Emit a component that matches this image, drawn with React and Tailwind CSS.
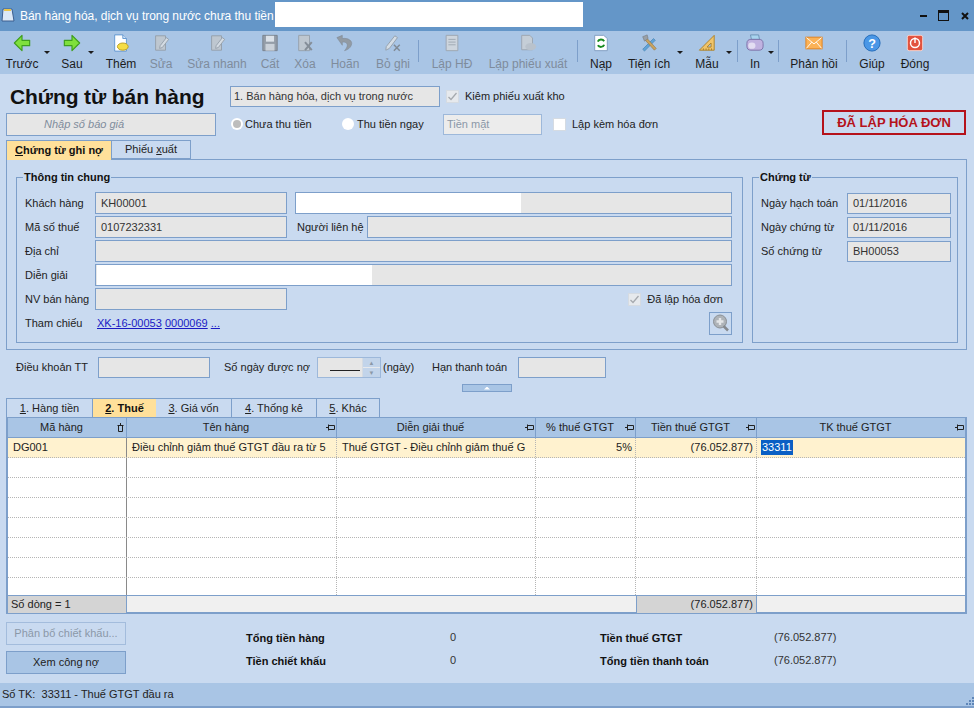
import React from "react";

const FONT = "font-['Liberation_Sans',Arial,sans-serif]";

// toolbar icons, all drawn on a 20x20 box
const icons = {
    back: (
        <path d="M10 1.5 L1.5 10 L10 18.5 L10 13 L18.5 13 L18.5 7 L10 7 Z" fill="#7fe03c" stroke="#3f9e1e" strokeWidth="1.3" strokeLinejoin="round" />
    ),
    next: (
        <path d="M10 1.5 L18.5 10 L10 18.5 L10 13 L1.5 13 L1.5 7 L10 7 Z" fill="#7fe03c" stroke="#3f9e1e" strokeWidth="1.3" strokeLinejoin="round" />
    ),
    add: (
        <>
            <path d="M3 1 H12 L16 5 V19 H3 Z" fill="#fff" stroke="#5b93cf" />
            <path d="M12 1 V5 H16" fill="#cfe2f6" stroke="#5b93cf" />
            <ellipse cx="12" cy="14" rx="6" ry="4" fill="#f5dd45" stroke="#b79a1e" />
        </>
    ),
    edit: (
        <>
            <path d="M4 2 H15 V18 H4 Z" fill="#c4c8cc" stroke="#8f959b" />
            <path d="M9 13 L16 4 L18.5 6 L11.5 15 L8.5 16 Z" fill="#dfe1e3" stroke="#8f959b" />
        </>
    ),
    save: (
        <>
            <path d="M2 1.5 H18 V18.5 H2 Z" fill="#8f9499" stroke="#6c7176" />
            <rect x="5.5" y="2" width="9" height="6.5" fill="#e9eaeb" />
            <rect x="5" y="11" width="10" height="7.5" fill="#d3d5d7" />
        </>
    ),
    del: (
        <>
            <path d="M3 1.5 H15 V18.5 H3 Z" fill="#c4c8cc" stroke="#8f959b" />
            <path d="M10 9 L17.5 18 M17.5 9 L10 18" stroke="#7c8186" strokeWidth="2.2" />
        </>
    ),
    undo: (
        <path d="M1 4 L7 1.5 L7 5 C14 4 19 8 17 12.5 C16 15.5 13 17.5 9.5 18.5 C12.5 15 13.5 12 11.5 10 C10.5 9 8.5 9 7 9 L7 12.5 Z" fill="#8d9195" stroke="#74797e" strokeWidth="0.6" />
    ),
    cancel: (
        <>
            <path d="M2.5 14 L12 2 L15 4 L6 16 L2 18 Z" fill="#dfe3e7" stroke="#8f959b" />
            <path d="M11 12 L17.5 18.5 M17.5 12 L11 18.5" stroke="#767b80" strokeWidth="1.6" />
        </>
    ),
    invoice: (
        <>
            <path d="M3.5 1.5 H16.5 V18.5 H3.5 Z" fill="#d6d9dc" stroke="#989da2" />
            <path d="M6 6 H14 M6 9 H14 M6 12 H14" stroke="#9a9fa4" />
        </>
    ),
    slip: (
        <>
            <path d="M3 1.5 H12 L15 4.5 V17.5 H3 Z" fill="#cdd1d4" stroke="#989da2" />
            <ellipse cx="13" cy="14" rx="6" ry="4" fill="#bec2c6" />
        </>
    ),
    reload: (
        <>
            <path d="M3 1.5 H13 L17 5 V18.5 H3 Z" fill="#fff" stroke="#7a98bd" />
            <path d="M6.5 8.5 C7.5 5.5 12 5.5 13.5 8 M13.5 12 C12.5 15 8 15 6.5 12.5" stroke="#178a1e" strokeWidth="2.2" fill="none" />
        </>
    ),
    tools: (
        <>
            <path d="M3 17 L15 5 L17 7 L5 19 Z" fill="#5fa3d8" stroke="#3d77a8" strokeWidth="0.6" />
            <path d="M16 18 L5 6 L7 4 L18 16 Z" fill="#c9a25e" stroke="#88703f" strokeWidth="0.6" />
            <path d="M3 3 L8 1 L9 5 L5 8 Z" fill="#9aa0a6" stroke="#6f7479" strokeWidth="0.6" />
        </>
    ),
    template: (
        <>
            <path d="M18 1.5 V18 H1.5 Z" fill="#f0c46a" stroke="#a97e26" />
            <path d="M14.5 10 V14.5 H10 Z" fill="#a9c5e5" stroke="#a97e26" />
            <path d="M15 18 V16 M12 18 V16 M9 18 V16 M6 18 V16" stroke="#a97e26" />
        </>
    ),
    print: (
        <>
            <path d="M5 1 L14 1 L15 6 H6 Z" fill="#a8d4ef" stroke="#6a8fb3" />
            <rect x="1" y="6" width="18" height="12" rx="4.5" fill="#c0b2e0" stroke="#7b6fa6" />
            <ellipse cx="6.5" cy="13" rx="4" ry="3.5" fill="#e3def2" />
        </>
    ),
    mail: (
        <>
            <rect x="1" y="3.5" width="18" height="13" fill="#fbb257" stroke="#e07f18" />
            <path d="M1.5 4 L10 11 L18.5 4 M1.5 16 L7.5 9 M18.5 16 L12.5 9" stroke="#fff" fill="none" />
        </>
    ),
    help: (
        <>
            <circle cx="10" cy="10" r="9" fill="#4a97e6" stroke="#1f68b5" />
            <text x="10" y="15" textAnchor="middle" fontSize="14" fontWeight="700" fill="#fff" fontFamily="Liberation Sans">?</text>
        </>
    ),
    close: (
        <>
            <rect x="1.5" y="1.5" width="17" height="17" rx="2" fill="#e2533f" stroke="#f8d6cf" />
            <circle cx="10" cy="10" r="5" fill="none" stroke="#fff" strokeWidth="1.6" />
            <path d="M10 4 V10" stroke="#fff" strokeWidth="1.6" />
        </>
    ),
};

function ToolButton({ icon, label, off, className }) {
    return (
        <div className={`flex flex-col items-center shrink-0 ${className}`}>
            <svg width="18" height="18" viewBox="0 0 20 20" className={`mt-[3px] ${off ? "opacity-80" : ""}`}>
                {icons[icon]}
            </svg>
            <span className={`mt-[3px] text-[12px] leading-[18px] whitespace-nowrap ${off ? "text-[#7f8c9c]" : "text-[#1c1c1c]"}`}>{label}</span>
        </div>
    );
}

function Caret({ className = "" }) {
    return <span className={`w-[6px] h-[3px] mt-[20px] shrink-0 bg-[#1c1c1c] [clip-path:polygon(0_0,100%_0,50%_100%)] ${className}`} />;
}

function Sep({ className = "" }) {
    return <span className={`w-[1px] h-[22px] mt-[9px] shrink-0 bg-[#7d9fca] ${className}`} />;
}

function Box({ children, className = "" }) {
    return (
        <div className={`h-[22px] border border-[#7d9fca] bg-[#e6e6e6] px-[5px] flex items-center text-[11px] text-[#333] whitespace-nowrap overflow-hidden shrink-0 ${className}`}>
            {children}
        </div>
    );
}

function Tick({ className = "" }) {
    return (
        <span className={`w-[13px] h-[13px] bg-[#e6e9ed] border border-[#d5dbe2] flex items-center justify-center shrink-0 ${className}`}>
            <svg width="11" height="11" viewBox="0 0 11 11">
                <path d="M1.5 6 L4 8.5 L9.5 2" fill="none" stroke="#a5a9ae" strokeWidth="1.3" />
            </svg>
        </span>
    );
}

function Group({ title, children, className = "" }) {
    return (
        <div className={`relative shrink-0 border border-[#7d9fca] ${className}`}>
            <span className="absolute top-[-8px] left-[6px] px-[1px] bg-[#c9daf0] text-[11px] leading-[15px] font-bold text-[#111]">{title}</span>
            {children}
        </div>
    );
}

function FormRow({ label, children, className = "" }) {
    return (
        <div className={`flex items-center h-[22px] mb-[2px] ${className}`}>
            <span className="w-[70px] shrink-0 text-[#222]">{label}</span>
            {children}
        </div>
    );
}

function DateRow({ label, value }) {
    return (
        <div className="flex items-center h-[21px] mb-[3px]">
            <span className="w-[86px] shrink-0 text-[#222]">{label}</span>
            <Box className="w-[104px] !h-[21px]">{value}</Box>
        </div>
    );
}

const COLS = "grid grid-cols-[119px_210px_199px_100px_121px_1fr]";
const HEADERS = ["Mã hàng", "Tên hàng", "Diễn giải thuế", "% thuế GTGT", "Tiền thuế GTGT", "TK thuế GTGT"];

function EmptyRow() {
    return (
        <div className={`${COLS} h-[20px] border-b border-dotted border-[#b5b5b5]`}>
            <div className="border-r border-[#8a8a8a]" />
            <div className="border-r border-dotted border-[#b5b5b5]" />
            <div className="border-r border-dotted border-[#b5b5b5]" />
            <div className="border-r border-dotted border-[#b5b5b5]" />
            <div className="border-r border-dotted border-[#b5b5b5]" />
            <div />
        </div>
    );
}

export default function App() {
    return (
        <div className={`${FONT} w-[974px] h-[708px] flex flex-col overflow-hidden bg-[#c9daf0] text-[11px] text-[#222]`}>
            {/* title bar */}
            <div className="h-[31px] shrink-0 bg-[#6496c8] flex items-start">
                <svg width="14" height="16" viewBox="0 0 14 16" className="ml-[1px] mt-[7px]">
                    <path d="M2 2 H11 L13 14 H1 Z" fill="#dbe8f6" stroke="#3d5f8f" />
                    <path d="M3 2 H10 V4 H3 Z" fill="#e9c44a" />
                </svg>
                <span className="ml-[5px] mt-[8px] w-[255px] text-[12px] leading-[16px] text-white whitespace-nowrap tracking-[-0.04px]">Bán hàng hóa, dịch vụ trong nước chưa thu tiền</span>
                <div className="w-[308px] h-[25px] mt-[2px] bg-white" />
                <div className="ml-auto mr-[5px] mt-[10px] flex items-center">
                    <span className="w-[7px] h-[2px] bg-[#111]" />
                    <span className="w-[11px] h-[11px] ml-[11px] border border-[#111] border-t-[3px]" />
                    <svg width="8" height="8" viewBox="0 0 8 8" className="ml-[12px]">
                        <path d="M1 1 L7 7 M7 1 L1 7" stroke="#111" strokeWidth="2" />
                    </svg>
                </div>
            </div>

            {/* toolbar */}
            <div className="h-[43px] shrink-0 bg-[#a9c5e5] flex items-start pl-[3px]">
                <ToolButton icon="back" label="Trước" className="w-[38px]" />
                <Caret className="ml-[3px]" />
                <ToolButton icon="next" label="Sau" className="w-[32px] ml-[6px]" />
                <Caret />
                <ToolButton icon="add" label="Thêm" className="w-[54px]" />
                <ToolButton icon="edit" label="Sửa" off className="w-[26px]" />
                <ToolButton icon="edit" label="Sửa nhanh" off className="w-[86px]" />
                <ToolButton icon="save" label="Cất" off className="w-[20px]" />
                <ToolButton icon="del" label="Xóa" off className="w-[50px]" />
                <ToolButton icon="undo" label="Hoãn" off className="w-[30px]" />
                <ToolButton icon="cancel" label="Bỏ ghi" off className="w-[50px] ml-[8px]" />
                <Sep />
                <ToolButton icon="invoice" label="Lập HĐ" off className="w-[66px]" />
                <ToolButton icon="slip" label="Lập phiếu xuất" off className="w-[86px]" />
                <Sep className="ml-[6px]" />
                <ToolButton icon="reload" label="Nạp" className="w-[46px]" />
                <ToolButton icon="tools" label="Tiện ích" className="w-[50px]" />
                <Caret className="ml-[3px]" />
                <ToolButton icon="template" label="Mẫu" className="w-[38px] ml-[5px]" />
                <Caret />
                <Sep className="ml-[5px]" />
                <ToolButton icon="print" label="In" className="w-[26px] ml-[4px]" />
                <Caret />
                <Sep className="ml-[4px]" />
                <ToolButton icon="mail" label="Phản hồi" className="w-[64px] ml-[3px]" />
                <Sep />
                <ToolButton icon="help" label="Giúp" className="w-[50px]" />
                <ToolButton icon="close" label="Đóng" className="w-[36px]" />
            </div>

            {/* content */}
            <div className="flex-1 min-h-0 px-[6px] flex flex-col">
                <div className="flex items-center h-[21px] mt-[12px]">
                    <h1 className="w-[220px] ml-[4px] text-[21px] leading-[26px] font-bold text-[#111] whitespace-nowrap tracking-[-0.1px]">Chứng từ bán hàng</h1>
                    <div className="w-[210px] h-[21px] border border-[#7d9fca] bg-[#e6e6e6] px-[3px] flex items-center text-[#333]">1. Bán hàng hóa, dịch vụ trong nước</div>
                    <Tick className="ml-[6px]" />
                    <span className="ml-[6px]">Kiêm phiếu xuất kho</span>
                </div>

                <div className="flex items-center h-[24px] mt-[5px]">
                    <div className="w-[210px] h-[23px] border border-[#7d9fca] bg-[#e6e6e6] pl-[37px] flex items-center italic text-[#7f8c9c]">Nhập số báo giá</div>
                    <span className="ml-[15px] w-[12px] h-[12px] rounded-full bg-white flex items-center justify-center shrink-0">
                        <span className="w-[8px] h-[8px] rounded-full bg-[#bdbdbd]" />
                    </span>
                    <span className="ml-[2px] w-[97px]">Chưa thu tiền</span>
                    <span className="w-[12px] h-[12px] rounded-full bg-white shrink-0" />
                    <span className="ml-[3px] w-[86px]">Thu tiền ngay</span>
                    <div className="w-[99px] h-[21px] border border-[#9db8da] bg-[#ececec] px-[3px] flex items-center text-[#8b98a8]">Tiền mặt</div>
                    <span className="ml-[11px] w-[13px] h-[13px] bg-white border border-[#d5dbe2] shrink-0" />
                    <span className="ml-[6px]">Lập kèm hóa đơn</span>
                    <div className="ml-auto mr-[2px] -mt-[3px] w-[144px] h-[25px] border-2 border-[#b5121b] flex items-center justify-center text-[13px] font-bold text-[#b5121b] whitespace-nowrap">ĐÃ LẬP HÓA ĐƠN</div>
                </div>

                {/* document tabs */}
                <div className="flex h-[20px] mt-[4px] relative z-10">
                    <div className="w-[106px] h-[20px] border border-b-0 border-[#7d9fca] bg-[#ffe09a] flex items-center justify-center font-bold text-[#111]"><span><u>C</u>hứng từ ghi nợ</span></div>
                    <div className="w-[79px] h-[19px] border border-l-0 border-[#7d9fca] flex items-center justify-center"><span>Phiếu <u>x</u>uất</span></div>
                </div>

                <div className="w-[961px] h-[191px] -mt-[1px] border border-[#7d9fca] pt-[17px] pl-[9px] flex gap-[9px]">
                    <Group title="Thông tin chung" className="w-[727px] h-[166px] pt-[14px] px-[8px]">
                        <FormRow label="Khách hàng">
                            <Box className="w-[192px]">KH00001</Box>
                            <div className="ml-[8px] w-[437px] h-[22px] border border-[#7d9fca] bg-[#e6e6e6]">
                                <div className="w-[225px] h-full bg-white" />
                            </div>
                        </FormRow>
                        <FormRow label="Mã số thuế">
                            <Box className="w-[192px]">0107232331</Box>
                            <span className="ml-[10px] w-[70px] shrink-0">Người liên hệ</span>
                            <Box className="w-[365px]" />
                        </FormRow>
                        <FormRow label="Địa chỉ">
                            <Box className="w-[637px]" />
                        </FormRow>
                        <FormRow label="Diễn giải">
                            <div className="w-[637px] h-[22px] border border-[#7d9fca] bg-[#e6e6e6] pl-[1px]">
                                <div className="w-[275px] h-full bg-white" />
                            </div>
                        </FormRow>
                        <FormRow label="NV bán hàng">
                            <Box className="w-[192px]" />
                            <Tick className="ml-auto" />
                            <span className="ml-[6px] mr-[11px]">Đã lập hóa đơn</span>
                        </FormRow>
                        <FormRow label="Tham chiếu">
                            <span className="ml-[2px] text-[#1a1ac4] whitespace-nowrap"><u>XK-16-00053</u> <u>0000069</u> <u>...</u></span>
                            <div className="ml-auto mr-[2px] w-[23px] h-[23px] border border-[#7d9fca] flex items-center justify-center">
                                <svg width="18" height="18" viewBox="0 0 18 18">
                                    <circle cx="8" cy="7.5" r="6.5" fill="#aeb3b8" stroke="#8b9095" />
                                    <path d="M11.5 12 L16 16.5" stroke="#85898e" strokeWidth="2.5" />
                                    <path d="M8 4 V11 M4.5 7.5 H11.5" stroke="#e4e6e8" strokeWidth="2.4" />
                                </svg>
                            </div>
                        </FormRow>
                    </Group>
                    <Group title="Chứng từ" className="w-[206px] h-[166px] pt-[15px] px-[8px]">
                        <DateRow label="Ngày hạch toán" value="01/11/2016" />
                        <DateRow label="Ngày chứng từ" value="01/11/2016" />
                        <DateRow label="Số chứng từ" value="BH00053" />
                    </Group>
                </div>

                {/* payment terms */}
                <div className="flex items-center h-[21px] mt-[7px]">
                    <span className="ml-[10px] w-[82px]">Điều khoản TT</span>
                    <Box className="w-[112px] !h-[21px]" />
                    <span className="ml-[14px] w-[93px]">Số ngày được nợ</span>
                    <div className="w-[64px] h-[21px] border border-[#9db8da] bg-[#e6e6e6] flex justify-end">
                        <span className="w-[30px] h-[13px] mr-[2px] border-b border-[#222] shrink-0" />
                        <div className="w-[18px] flex flex-col bg-[#c2d4ea] border-l border-[#d5dbe2]">
                            <span className="flex-1 border-b border-[#e6e9ed] flex items-center justify-center text-[6px] leading-none text-[#8b98a8]">▲</span>
                            <span className="flex-1 flex items-center justify-center text-[6px] leading-none text-[#8b98a8]">▼</span>
                        </div>
                    </div>
                    <span className="ml-[2px] w-[49px]">(ngày)</span>
                    <span className="w-[86px]">Hạn thanh toán</span>
                    <Box className="w-[88px] !h-[21px]" />
                </div>

                <div className="ml-[456px] w-[50px] h-[8px] mt-[6px] border border-[#7d9fca] bg-[#a9c5e5] flex items-center justify-center">
                    <span className="w-[6px] h-[3px] bg-white [clip-path:polygon(50%_0,100%_100%,0_100%)]" />
                </div>

                {/* detail tabs */}
                <div className="flex h-[19px] mt-[6px]">
                    <div className="w-[87px] border border-b-0 border-[#7d9fca] flex items-center justify-center"><span><u>1</u>. Hàng tiền</span></div>
                    <div className="w-[63px] bg-[#ffe09a] border-t border-[#7d9fca] flex items-center justify-center font-bold text-[#111]"><span><u>2</u>. Thuế</span></div>
                    <div className="w-[76px] border border-b-0 border-l-0 border-[#7d9fca] flex items-center justify-center"><span><u>3</u>. Giá vốn</span></div>
                    <div className="w-[85px] border border-b-0 border-l-0 border-[#7d9fca] flex items-center justify-center"><span><u>4</u>. Thống kê</span></div>
                    <div className="w-[63px] border border-b-0 border-l-0 border-[#7d9fca] flex items-center justify-center"><span><u>5</u>. Khác</span></div>
                </div>

                {/* grid */}
                <div className="w-[961px] border-x-2 border-b-2 border-t border-[#7d9fca] bg-white">
                    <div className={`${COLS} h-[20px] bg-[#a9c5e5] border-b border-[#7d9fca]`}>
                        {HEADERS.map((h, i) => (
                            <div key={h} className="relative flex items-center justify-center pr-[11px] border-r border-[#7d9fca] last:border-r-0 text-[#222]">
                                {h}
                                <svg width="9" height="9" viewBox="0 0 9 9" className={`absolute right-[1px] top-[5px] ${i === 0 ? "rotate-90" : ""}`}>
                                    <path d="M0 4.5 H2.5 M2.5 1.5 V7.5 M2.5 2.5 H8.5 V6.5 H2.5" stroke="#222" fill="none" />
                                </svg>
                            </div>
                        ))}
                    </div>
                    <div className="h-[157px] overflow-hidden">
                        <div className={`${COLS} h-[20px] bg-[#fff2cf] border-b border-dotted border-[#b5b5b5]`}>
                            <div className="border-r border-[#8a8a8a] pl-[5px] flex items-center">DG001</div>
                            <div className="border-r border-dotted border-[#b5b5b5] pl-[5px] flex items-center whitespace-nowrap">Điều chỉnh giảm thuế GTGT đầu ra từ 5</div>
                            <div className="border-r border-dotted border-[#b5b5b5] pl-[5px] flex items-center whitespace-nowrap">Thuế GTGT - Điều chỉnh giảm thuế G</div>
                            <div className="border-r border-dotted border-[#b5b5b5] pr-[3px] flex items-center justify-end">5%</div>
                            <div className="border-r border-dotted border-[#b5b5b5] pr-[3px] flex items-center justify-end">(76.052.877)</div>
                            <div className="pl-[4px] flex items-center">
                                <span className="bg-[#0a5fc4] text-white leading-[15px] px-[1px]">33311</span>
                            </div>
                        </div>
                        {[0, 1, 2, 3, 4, 5, 6].map((i) => (
                            <EmptyRow key={i} />
                        ))}
                    </div>
                    <div className={`${COLS} h-[17px] bg-[#f0f0f0] border-t border-[#7d9fca]`}>
                        <div className="bg-[#d4d4d4] border-r border-[#7d9fca] pl-[3px] flex items-center">Số dòng = 1</div>
                        <div className="col-span-3" />
                        <div className="bg-[#d4d4d4] border-x border-[#7d9fca] pr-[3px] flex items-center justify-end">(76.052.877)</div>
                        <div />
                    </div>
                </div>

                {/* totals */}
                <div className="flex mt-[8px]">
                    <div className="w-[120px] flex flex-col gap-[6px]">
                        <div className="h-[23px] border border-[#a3bcdc] flex items-center justify-center text-[#8b98a8]">Phân bổ chiết khấu...</div>
                        <div className="h-[23px] border border-[#7d9fca] bg-[#a9c5e5] flex items-center justify-center">Xem công nợ</div>
                    </div>
                    <div className="ml-[120px] w-[210px] mt-[5px] font-bold text-[#111]">
                        <div className="h-[23px] flex justify-between items-center">Tổng tiền hàng <span className="font-normal text-[#333] -mt-[2px]">0</span></div>
                        <div className="h-[23px] flex justify-between items-center">Tiền chiết khấu <span className="font-normal text-[#333] -mt-[2px]">0</span></div>
                    </div>
                    <div className="ml-[144px] mt-[5px]">
                        <div className="h-[23px] flex items-center"><span className="w-[174px] font-bold text-[#111]">Tiền thuế GTGT</span><span className="text-[#333] -mt-[2px]">(76.052.877)</span></div>
                        <div className="h-[23px] flex items-center"><span className="w-[174px] font-bold text-[#111]">Tổng tiền thanh toán</span><span className="text-[#333] -mt-[2px]">(76.052.877)</span></div>
                    </div>
                </div>
            </div>

            {/* status bar */}
            <div className="h-[23px] shrink-0 bg-[#a9c5e5] pl-[2px] flex items-center">
                Số TK:&nbsp; 33311 - Thuế GTGT đầu ra
                <svg width="8" height="8" viewBox="0 0 8 8" className="ml-auto self-end mb-[1px]">
                    <path d="M6 0 H8 V2 H6 Z M3 3 H5 V5 H3 Z M6 3 H8 V5 H6 Z M0 6 H2 V8 H0 Z M3 6 H5 V8 H3 Z M6 6 H8 V8 H6 Z" fill="#5f86b8" />
                </svg>
            </div>
            <div className="h-[2px] shrink-0 bg-[#7d9fca]" />
        </div>
    );
}
